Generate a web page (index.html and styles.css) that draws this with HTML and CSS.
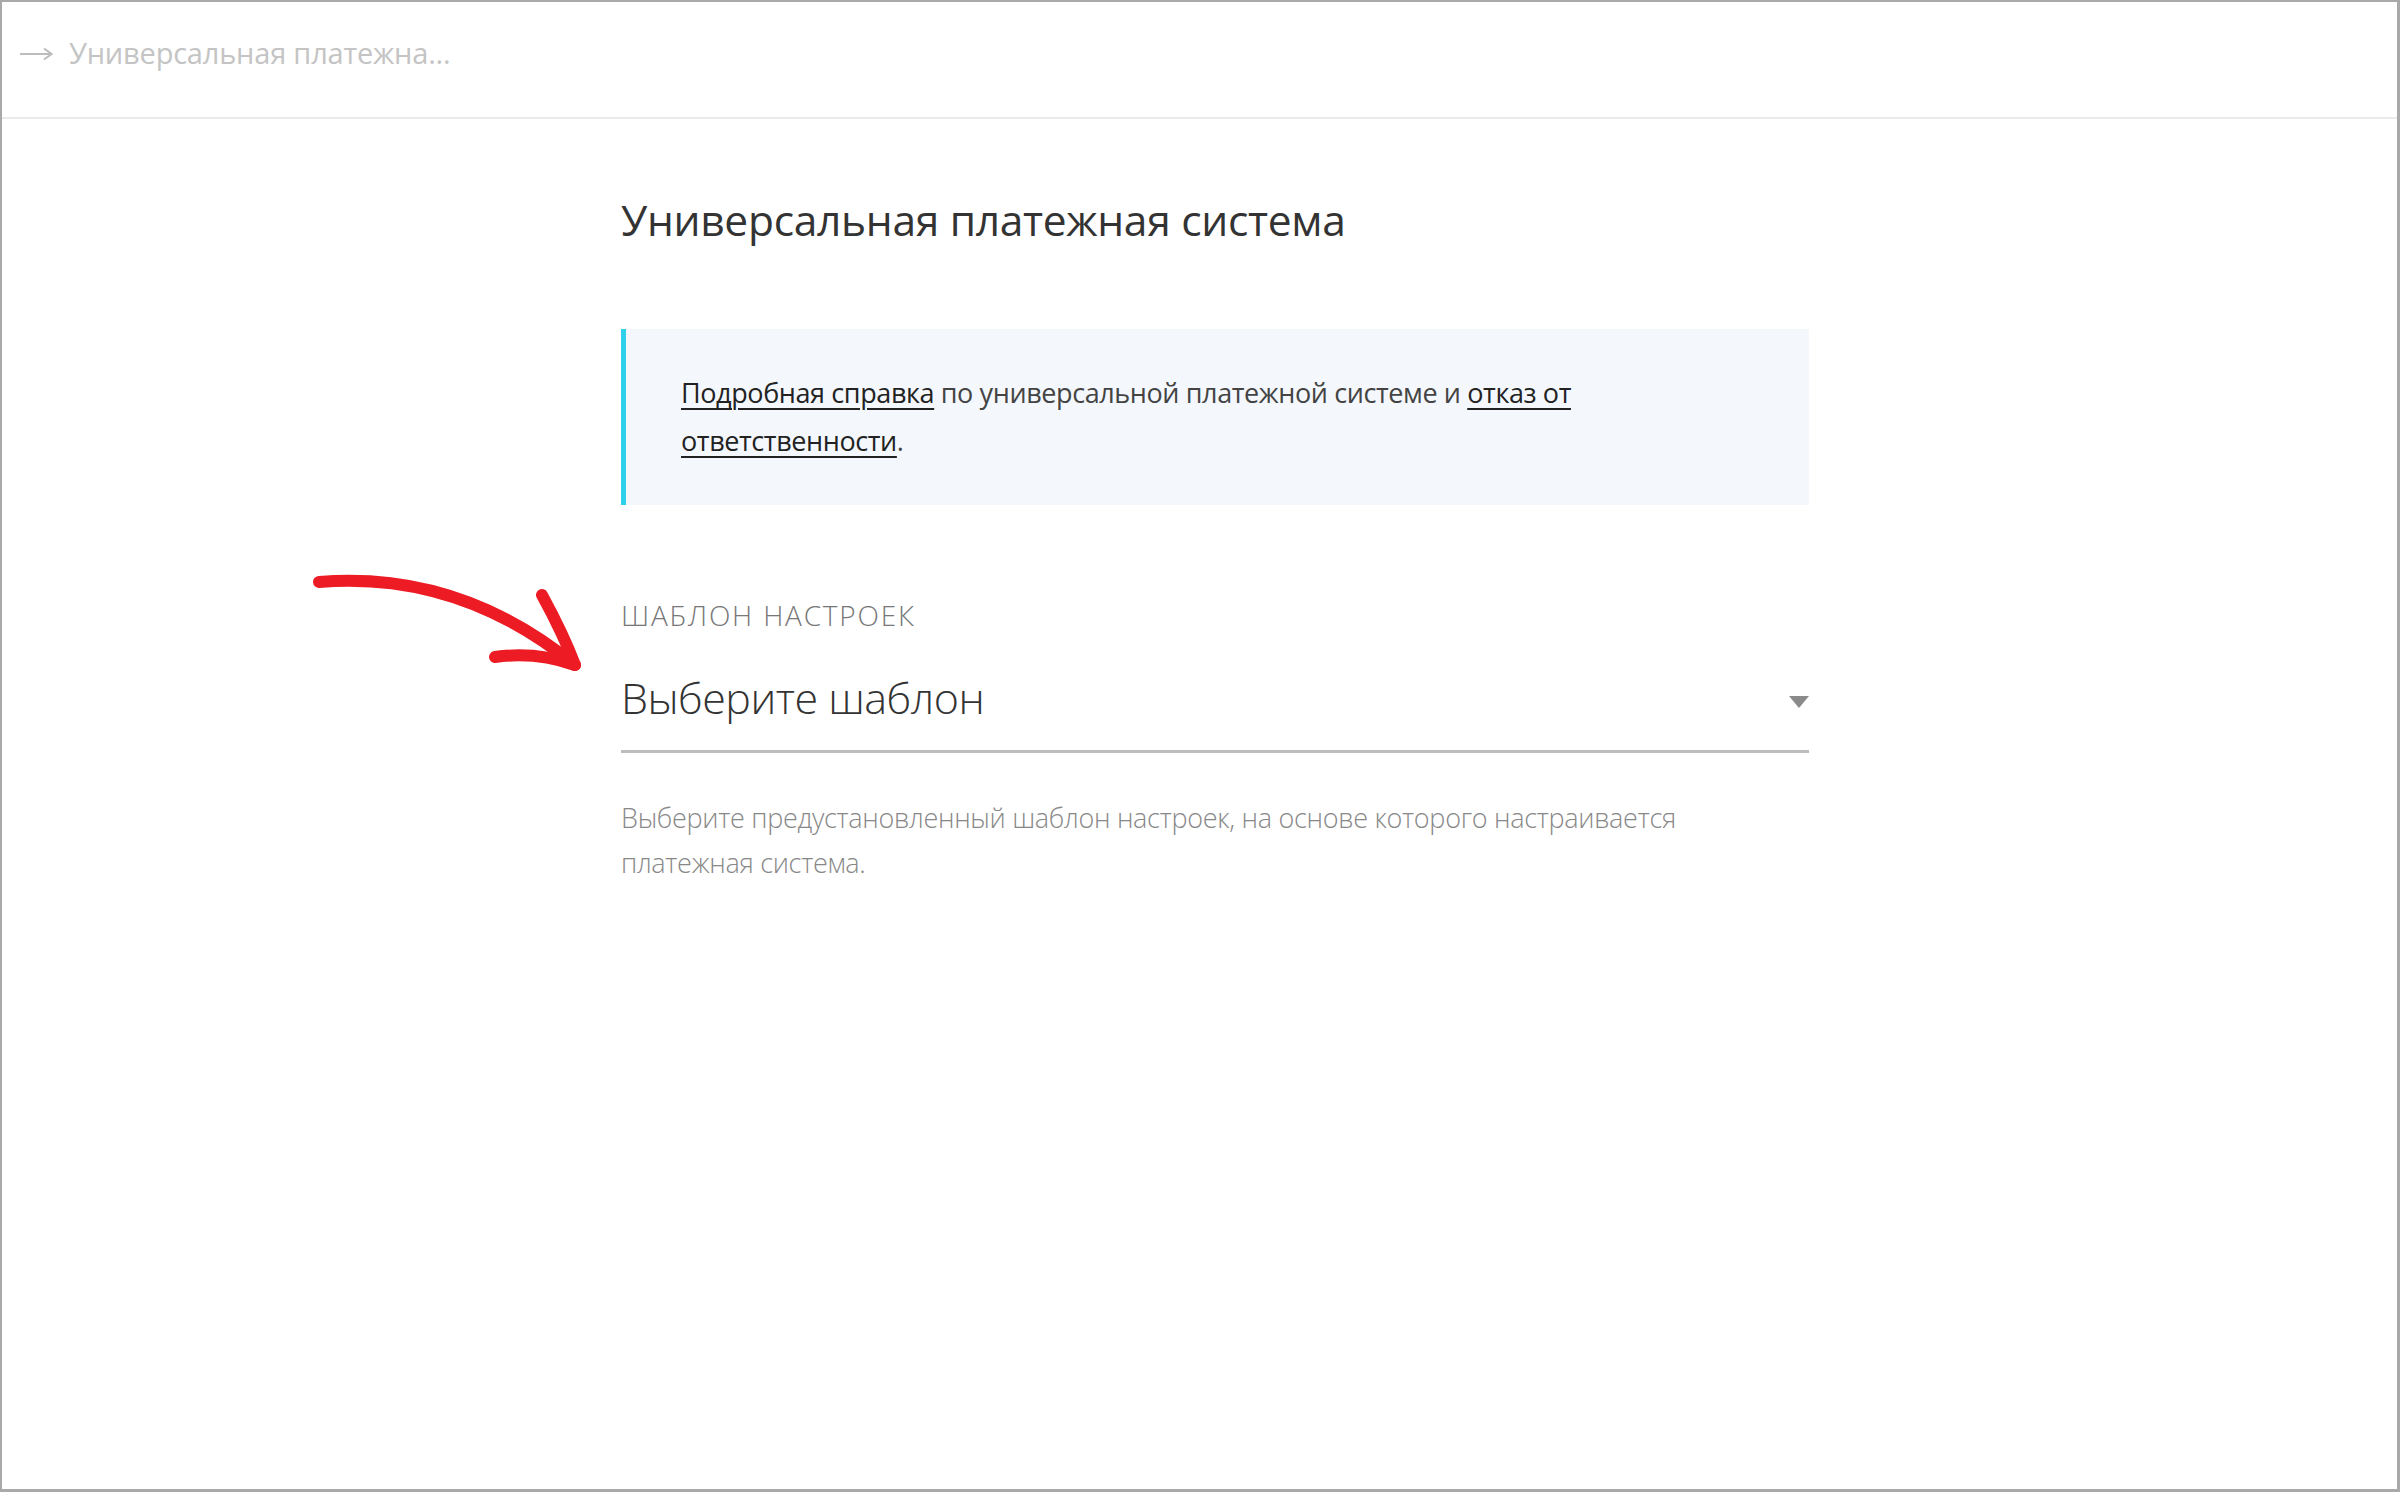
FILE: index.html
```html
<!DOCTYPE html>
<html lang="ru">
<head>
  <meta charset="UTF-8" />
  <meta name="viewport" content="width=device-width, initial-scale=1.0" />
  <title>Универсальная платежная система</title>
  <link rel="stylesheet" href="styles.css">
</head>
<body>
  <div class="frame">
    <div class="topbar">
      <svg class="crumb-arrow" width="34" height="14" viewBox="0 0 34 14">
        <path d="M1 7 H32 M25 1.5 L32.5 7 L25 12.5" fill="none" stroke="#bdbdbd" stroke-width="2"/>
      </svg>
      <span class="crumb">Универсальная платежна...</span>
    </div>

    <div class="content">
      <h1>Универсальная платежная система</h1>

      <div class="notice">
        <p><a href="#">Подробная справка</a><span> по универсальной платежной системе и </span><a href="#">отказ от ответственности</a><span>.</span></p>
      </div>

      <div class="field">
        <div class="field-label">Шаблон настроек</div>
        <div class="select">
          <span class="select-value">Выберите шаблон</span>
          <span class="select-caret"></span>
        </div>
        <p class="field-help">Выберите предустановленный шаблон настроек, на основе которого настраивается платежная система.</p>
      </div>
    </div>

    <svg class="pointer" width="290" height="120" viewBox="0 0 290 120">
      <path d="M17 15 C 90 9, 180 22, 273 98" fill="none" stroke="#ed1c24" stroke-width="12" stroke-linecap="round"/>
      <path d="M240 28 C 252 50, 264 74, 273 98 C 250 90, 222 86, 193 90" fill="none" stroke="#ed1c24" stroke-width="12" stroke-linecap="round" stroke-linejoin="round"/>
    </svg>
  </div>
</body>
</html>
```

FILE: styles.css
```css
html, body {
  margin: 0;
  padding: 0;
  background: #fff;
}
body {
  font-family: 'Open Sans', 'Noto Sans', sans-serif;
  color: #333;
}
.frame {
  position: relative;
  box-sizing: border-box;
  width: 2400px;
  height: 1492px;
  border: 2px solid #a9a9a9;
  border-right-width: 3px;
  border-bottom-width: 3px;
}
.topbar {
  height: 117px;
  border-bottom: 2px solid #ebebeb;
  display: flex;
  align-items: center;
  padding: 0 17px 14px;
  box-sizing: border-box;
  color: #c4c4c4;
  font-size: 29px;
}
.crumb-arrow {
  margin-right: 16px;
  margin-top: 2px;
}
.crumb {
  letter-spacing: -0.2px;
}
.content {
  width: 1188px;
  margin-left: 619px;
}
h1 {
  margin: 71px 0 0;
  font-size: 42.5px;
  line-height: 60px;
  font-weight: 400;
  color: #333;
  letter-spacing: -0.3px;
}
.notice {
  margin-top: 79px;
  background: #f4f8fd;
  border-left: 5px solid #2ed0ea;
  padding: 40px 100px 40px 55px;
}
.notice p {
  margin: 0;
  max-width: 930px;
  font-size: 27px;
  line-height: 48px;
  color: #444;
  letter-spacing: -0.4px;
}
.notice a {
  color: #222;
  text-decoration: underline;
  text-decoration-thickness: 2px;
  text-underline-offset: 5px;
}
.field {
  margin-top: 92px;
}
.field-label {
  font-size: 28px;
  line-height: 36px;
  text-transform: uppercase;
  letter-spacing: 1.8px;
  color: #777;
  font-weight: 300;
}
.select {
  margin-top: 35px;
  display: flex;
  align-items: center;
  justify-content: space-between;
  padding-bottom: 22px;
  border-bottom: 3px solid #bdbdbd;
}
.select-value {
  font-size: 43px;
  line-height: 60px;
  font-weight: 300;
  color: #333;
  letter-spacing: -0.5px;
}
.select-caret {
  width: 0;
  height: 0;
  border-left: 10px solid transparent;
  border-right: 10px solid transparent;
  border-top: 12px solid #8a8a8a;
  margin-top: 8px;
}
.field-help {
  margin: 42px 0 0;
  max-width: 1100px;
  font-size: 27px;
  line-height: 45px;
  color: #888;
  font-weight: 300;
  letter-spacing: -0.3px;
}
.pointer {
  position: absolute;
  left: 300px;
  top: 565px;
}
```
